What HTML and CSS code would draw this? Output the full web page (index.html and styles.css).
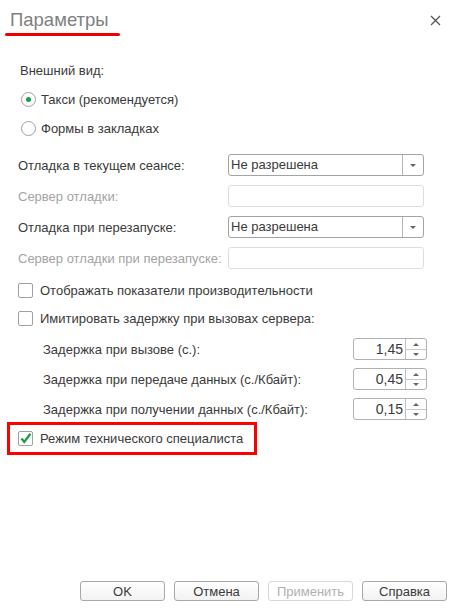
FILE: index.html
```html
<!DOCTYPE html>
<html lang="ru">
<head>
    <meta charset="UTF-8">
    <meta name="viewport" content="width=device-width, initial-scale=1.0">
    <title>Параметры</title>
    <link rel="stylesheet" href="styles.css">
</head>
<body>

    <div class="dialog">

        <!-- Header -->
        <div class="dlg-head">
            <h1 class="dlg-title">Параметры</h1>
            <button class="dlg-close" title="Закрыть">
                <svg width="11" height="11" viewBox="0 0 11 11"><path d="M1 1L10 10M10 1L1 10" stroke="#555" stroke-width="1.3"/></svg>
            </button>
        </div>

        <div class="dlg-body">
            <div class="group-label">Внешний вид:</div>
            <label class="radio-row"><span class="radio checked"></span>Такси (рекомендуется)</label>
            <label class="radio-row"><span class="radio"></span>Формы в закладках</label>

            <!-- Debug settings -->
            <div class="fields">
                <div class="field-row">
                    <span class="field-label">Отладка в текущем сеансе:</span>
                    <div class="select"><span class="select-value">Не разрешена</span><span class="select-btn"><span class="arrow-down"></span></span></div>
                </div>
                <div class="field-row">
                    <span class="field-label disabled">Сервер отладки:</span>
                    <div class="input disabled"></div>
                </div>
                <div class="field-row">
                    <span class="field-label">Отладка при перезапуске:</span>
                    <div class="select"><span class="select-value">Не разрешена</span><span class="select-btn"><span class="arrow-down"></span></span></div>
                </div>
                <div class="field-row">
                    <span class="field-label disabled">Сервер отладки при перезапуске:</span>
                    <div class="input disabled"></div>
                </div>
            </div>

            <div class="checks">
                <label class="check-row"><span class="checkbox"></span>Отображать показатели производительности</label>
                <label class="check-row"><span class="checkbox"></span>Имитировать задержку при вызовах сервера:</label>
            </div>

            <!-- Server call delays -->
            <div class="delays">
                <div class="delay-row">
                    <span class="delay-label">Задержка при вызове (с.):</span>
                    <div class="spin"><span class="spin-value">1,45</span><span class="spin-btns"><span class="arrow-up"></span><span class="arrow-down"></span></span></div>
                </div>
                <div class="delay-row">
                    <span class="delay-label">Задержка при передаче данных (с./Кбайт):</span>
                    <div class="spin"><span class="spin-value">0,45</span><span class="spin-btns"><span class="arrow-up"></span><span class="arrow-down"></span></span></div>
                </div>
                <div class="delay-row">
                    <span class="delay-label">Задержка при получении данных (с./Кбайт):</span>
                    <div class="spin"><span class="spin-value">0,15</span><span class="spin-btns"><span class="arrow-up"></span><span class="arrow-down"></span></span></div>
                </div>
            </div>

            <div class="highlight">
                <label class="check-row">
                    <span class="checkbox">
                        <svg width="16" height="16" viewBox="0 0 16 16"><path d="M3 7.5L6.5 11.5L14 1.5" fill="none" stroke="#1e9a4a" stroke-width="2.8"/></svg>
                    </span>Режим технического специалиста
                </label>
            </div>
        </div>

        <!-- Buttons -->
        <div class="dlg-buttons">
            <button class="btn">OK</button>
            <button class="btn">Отмена</button>
            <button class="btn" disabled>Применить</button>
            <button class="btn">Справка</button>
        </div>

    </div>

</body>
</html>
```

FILE: styles.css
```css
body {
    font-family: "Liberation Sans", Arial, sans-serif;
    font-size: 13px;
    color: #3a3a3a;
    margin: 0;
    background-color: #fff;
}
.dialog {
    width: 453px;
    height: 611px;
    display: flex;
    flex-direction: column;
}

/* header */
.dlg-head {
    display: flex;
    justify-content: space-between;
    align-items: flex-start;
    padding-top: 8px;
}
.dlg-title {
    display: inline-block;
    margin: 0;
    padding: 0 11px 0 10px;
    font-size: 18.5px;
    font-weight: normal;
    line-height: 24px;
    color: #808080;
}
.dlg-title::after {
    content: "";
    display: block;
    height: 3px;
    margin: 1px -11px 0 -5px;
    border-radius: 2px;
    background-color: #e00;
}
.dlg-close {
    width: 20px;
    height: 20px;
    margin: 2px 8px 0 0;
    padding: 0;
    border: none;
    background: none;
    display: flex;
    align-items: center;
    justify-content: center;
}

/* body */
.dlg-body {
    padding: 27px 0 0 18px;
}
.group-label {
    margin-left: 2px;
    line-height: 16px;
    margin-bottom: 6px;
}
.radio-row {
    display: flex;
    align-items: center;
    height: 29px;
    margin-left: 3px;
}
.radio {
    width: 13px;
    height: 13px;
    border: 1px solid #a0a0a0;
    border-radius: 50%;
    margin-right: 5px;
    display: flex;
    align-items: center;
    justify-content: center;
}
.radio.checked::after {
    content: "";
    width: 5px;
    height: 5px;
    border-radius: 50%;
    background-color: #1e9a4a;
}

.fields {
    margin-top: 11px;
    display: flex;
    flex-direction: column;
    gap: 9px;
}
.field-row {
    display: flex;
    align-items: center;
    height: 22px;
}
.field-label {
    width: 210px;
    white-space: nowrap;
}
.field-label.disabled {
    color: #a3a3a3;
}
.select, .input {
    box-sizing: border-box;
    width: 196px;
    height: 22px;
    border: 1px solid #a3a3a3;
    border-radius: 3px;
    display: flex;
}
.input.disabled {
    border-color: #dedede;
}
.select-value {
    flex: 1;
    padding-left: 2px;
    line-height: 20px;
}
.select-btn {
    width: 20px;
    border-left: 1px solid #b5b5b5;
    display: flex;
    align-items: center;
    justify-content: center;
}
.arrow-down, .arrow-up {
    width: 0;
    height: 0;
    border-left: 3px solid transparent;
    border-right: 3px solid transparent;
}
.arrow-down {
    border-top: 3px solid #666;
}
.arrow-up {
    border-bottom: 3px solid #666;
}

.checks {
    margin-top: 7px;
}
.check-row {
    display: flex;
    align-items: center;
    height: 28px;
}
.checkbox {
    box-sizing: border-box;
    width: 15px;
    height: 15px;
    border: 1px solid #a0a0a0;
    border-radius: 2px;
    margin-right: 7px;
    display: flex;
    align-items: center;
    justify-content: center;
}

.delays {
    margin-top: 6px;
    padding-left: 25px;
    display: flex;
    flex-direction: column;
    gap: 8px;
}
.delay-row {
    display: flex;
    align-items: center;
    height: 22px;
}
.delay-label {
    width: 310px;
    white-space: nowrap;
}
.spin {
    box-sizing: border-box;
    width: 74px;
    height: 22px;
    border: 1px solid #b0b0b0;
    border-radius: 3px;
    display: flex;
}
.spin-value {
    flex: 1;
    text-align: right;
    padding-right: 2px;
    line-height: 20px;
    font-size: 14px;
}
.spin-btns {
    width: 20px;
    border-left: 1px solid #c0c0c0;
    display: flex;
    flex-direction: column;
    align-items: center;
    justify-content: space-around;
    background: linear-gradient(#c8c8c8, #c8c8c8) center / 100% 1px no-repeat;
}

.highlight {
    box-sizing: border-box;
    width: 250px;
    height: 33px;
    margin: 2px 0 0 -11px;
    padding-left: 8px;
    border: 3px solid #f00;
    display: flex;
    align-items: center;
}

/* footer buttons */
.dlg-buttons {
    margin-top: auto;
    padding: 0 6px 10px 0;
    display: flex;
    justify-content: flex-end;
    gap: 9px;
}
.btn {
    width: 85px;
    height: 20px;
    padding: 0;
    font-family: inherit;
    font-size: 13px;
    color: #3a3a3a;
    border: 1px solid #a8a8a8;
    border-radius: 3px;
    background: linear-gradient(#fff, #f2f2f2);
}
.btn:disabled {
    color: #b0b0b0;
    border-color: #d8d8d8;
    background: #fff;
}
```
